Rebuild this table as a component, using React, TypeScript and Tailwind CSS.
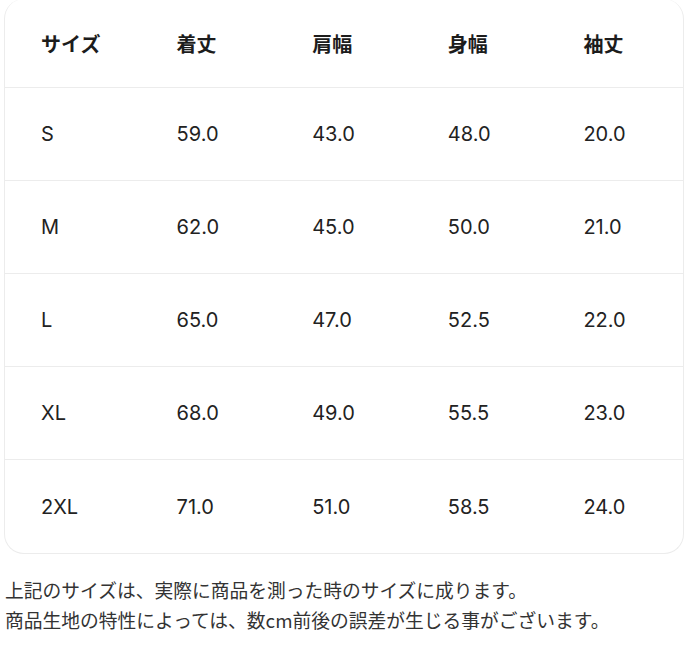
import React from "react";

const headers = ["サイズ", "着丈", "肩幅", "身幅", "袖丈"];

const rows: string[][] = [
  ["S", "59.0", "43.0", "48.0", "20.0"],
  ["M", "62.0", "45.0", "50.0", "21.0"],
  ["L", "65.0", "47.0", "52.5", "22.0"],
  ["XL", "68.0", "49.0", "55.5", "23.0"],
  ["2XL", "71.0", "51.0", "58.5", "24.0"],
];

const font = {
  fontFamily: '"Inter", "Noto Sans CJK JP", sans-serif',
};

export default function App() {
  return (
    <div className="w-[684px] h-[648px] bg-white pl-[4px]" style={font}>
      <div className="w-[680px] rounded-[20px] border border-[#ececec] border-t-0 overflow-hidden -mt-px">
        <div className="grid grid-cols-5 h-[89px] items-center border-b border-[#ececec] pt-px">
          {headers.map((h) => (
            <div
              key={h}
              className="pl-[36px] text-[20px] font-bold text-[#1c1c1c]"
              style={{ fontFamily: '"Noto Sans CJK JP", sans-serif' }}
            >
              {h}
            </div>
          ))}
        </div>
        {rows.map((r, i) => (
          <div
            key={r[0]}
            className={
              "grid grid-cols-5 h-[93px] items-center" +
              (i < rows.length - 1 ? " border-b border-[#ececec]" : "")
            }
          >
            {r.map((c, j) => (
              <div key={j} className="pl-[36px] text-[20px] text-[#222]">
                {c}
              </div>
            ))}
          </div>
        ))}
      </div>
      <div
        className="mt-[21px] text-[18.75px] leading-[30px] text-[#333]"
        style={{ fontFamily: '"Noto Sans CJK JP", sans-serif' }}
      >
        <p className="pl-px">上記のサイズは、実際に商品を測った時のサイズに成ります。</p>
        <p className="pl-px">商品生地の特性によっては、数cm前後の誤差が生じる事がございます。</p>
      </div>
    </div>
  );
}
